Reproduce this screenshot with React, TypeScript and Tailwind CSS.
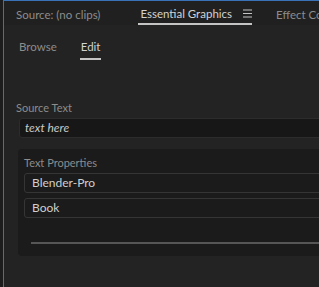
const App = () => {
  return (
    <div className="h-[287px] w-[319px] overflow-hidden bg-[#1d1d1d] pl-[3px] font-['Lato',sans-serif]">
      <div className="flex h-full w-[420px] flex-col border-l border-t border-[#3a72b8] bg-[#232323]">
        <header className="flex h-[24px] shrink-0 items-center bg-[#202020] pt-[3px] text-[11.5px]">
          <span className="ml-[12px] text-[#8c8c8c]">Source: (no clips)</span>
          <div className="ml-[38px] flex h-full items-center gap-[11px] border-b-2 border-[#c4c4c4] pl-[2px]">
            <span className="text-[#d2d2d2]">Essential Graphics</span>
            <svg width="9" height="9" viewBox="0 0 9 9" className="text-[#c4c4c4]">
              <path d="M0 1h9M0 4.5h9M0 8h9" stroke="currentColor" strokeWidth="1" />
            </svg>
          </div>
          <span className="ml-[24px] text-[#8c8c8c]">Effect Controls</span>
        </header>

        <nav className="flex h-[35px] shrink-0 items-end gap-[23px] pl-[15px] text-[11.5px]">
          <span className="pb-[5px] text-[#8c8c8c]">Browse</span>
          <span className="border-b-2 border-[#c4c4c4] px-[1px] pb-[3px] text-[#d2d2d2]">Edit</span>
        </nav>

        <div className="flex flex-col pl-[12px] pt-[41px]">
          <label className="text-[11px] leading-[14px] text-[#8c8c8c]">Source Text</label>
          <div className="ml-[3px] mt-[3px] flex h-[20px] items-center rounded-[3px] border border-[#2c2c2c] bg-[#171717] pl-[5px] text-[12px] italic text-[#c9c9c9]">
            text here
          </div>

          <section className="ml-[2px] mt-[11px] flex h-[107px] flex-col rounded-[4px] bg-[#1b1b1b] pl-[6px] pt-[7px]">
            <span className="text-[11px] leading-[14px] text-[#8c8c8c]">Text Properties</span>
            <div className="mt-[3px] flex h-[20px] items-center rounded-[3px] border border-[#353535] bg-[#1b1b1b] pl-[7px] text-[12px] text-[#cfcfcf]">
              Blender-Pro
            </div>
            <div className="mt-[5px] flex h-[20px] items-center rounded-[3px] border border-[#353535] bg-[#1b1b1b] pl-[7px] text-[12px] text-[#cfcfcf]">
              Book
            </div>
            <div className="ml-[7px] mt-[24px] h-[2px] bg-[#565656]" />
          </section>
        </div>
      </div>
    </div>
  );
};

export default App;
